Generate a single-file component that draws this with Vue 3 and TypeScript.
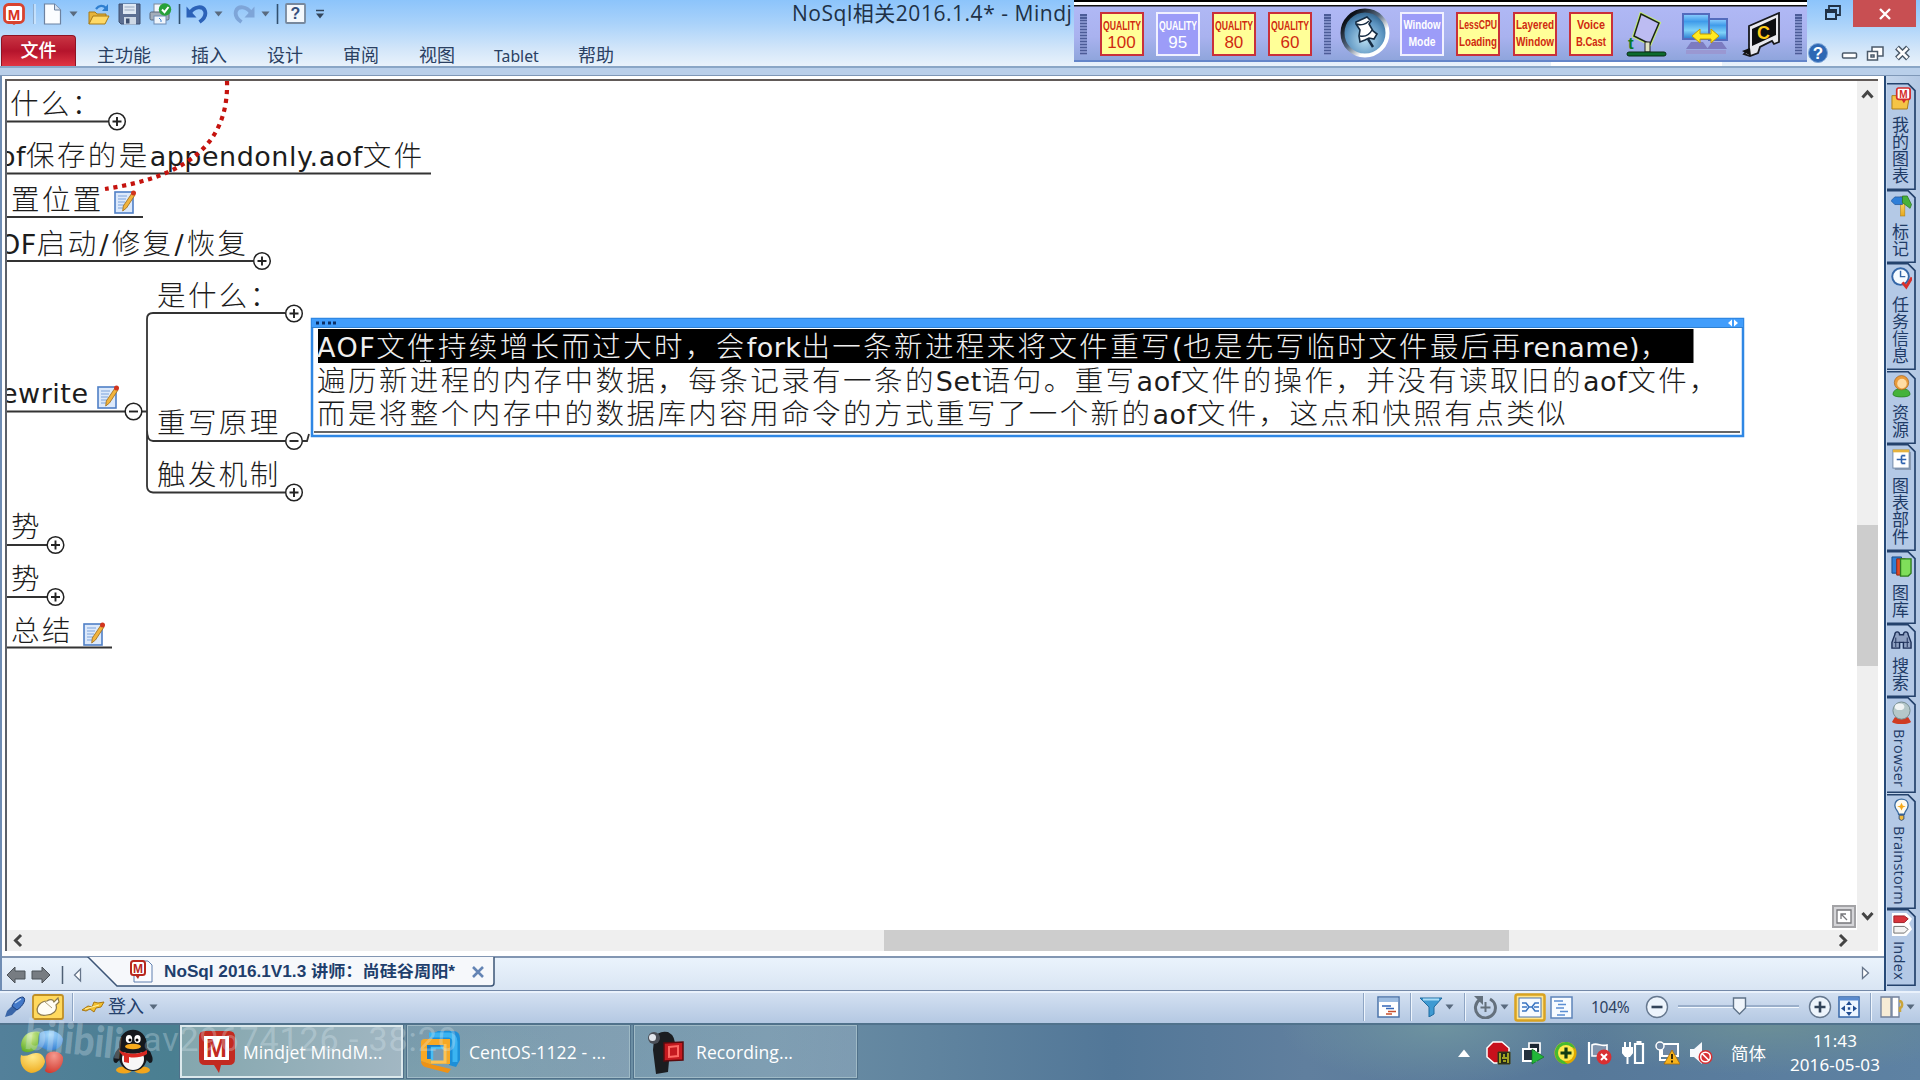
<script setup lang="ts">
interface Item {
  icon: string
  x: number
  w: number
  h: number
}
interface Placed extends Item {
  gap: number
}
interface Run {
  text: string
  cls: string
  dx?: number
}
interface Letter {
  c: string
  x: number
  y: number
  size: number
  fill: string
}

/* Turns left edges into the gap before each item, so rows flow in flex. */
function flow<T extends { x: number; w: number }>(items: T[], start = 0): (T & { gap: number })[] {
  let edge = start
  return items.map((it) => {
    const gap = it.x - edge
    edge = it.x + it.w
    return { ...it, gap }
  })
}

/* Splits mixed text so Chinese and Latin runs each get their own face. */
function runs(text: string): Run[] {
  return (text.match(/[\x20-\x7e]+|[^\x20-\x7e]+/g) ?? []).map((t) => {
    if (!/^[\x20-\x7e]/.test(t)) return { text: t, cls: 'cjk' }
    if (t === '/') return { text: t, cls: 'slash', dx: 1 }
    return { text: t, cls: t === 'AOF' ? 'caps' : 'latin' }
  })
}

const letters: Record<string, Letter> = {
  logo: { c: 'M', x: 11, y: 16.5, size: 15, fill: '#d8321f' },
  ask: { c: '?', x: 10.5, y: 16, size: 16, fill: '#35507c' },
  mine: { c: 'M', x: 12.5, y: 10.5, size: 10, fill: '#d42b2b' },
  tabdoc: { c: 'M', x: 8, y: 13.5, size: 12, fill: '#b8281e' },
  mindjet: { c: 'M', x: 19.5, y: 27, size: 25, fill: '#c22a20' },
}

const quick: Placed[] = flow([
  { icon: 'logo', x: 3, w: 22, h: 22 },
  { icon: 'sep', x: 32, w: 4, h: 22 },
  { icon: 'doc', x: 43, w: 19, h: 22 },
  { icon: 'down', x: 69, w: 9, h: 6 },
  { icon: 'open', x: 88, w: 22, h: 22 },
  { icon: 'save', x: 118, w: 23, h: 22 },
  { icon: 'print', x: 149, w: 23, h: 22 },
  { icon: 'bar', x: 178, w: 3, h: 22 },
  { icon: 'undo', x: 186, w: 22, h: 20 },
  { icon: 'down', x: 214, w: 9, h: 6 },
  { icon: 'redo', x: 233, w: 22, h: 20 },
  { icon: 'down', x: 261, w: 9, h: 6 },
  { icon: 'bar', x: 276, w: 3, h: 22 },
  { icon: 'ask', x: 285, w: 21, h: 22 },
  { icon: 'more', x: 316, w: 8, h: 10 },
])

const ribbon = flow([
  { label: '主功能', x: 97, w: 55 },
  { label: '插入', x: 191, w: 37 },
  { label: '设计', x: 267, w: 37 },
  { label: '审阅', x: 343, w: 37 },
  { label: '视图', x: 419, w: 37 },
  { label: 'Tablet', x: 494, w: 45 },
  { label: '帮助', x: 578, w: 38 },
], 76)

const quality = [
  { a: 'QUALITY', b: '100', on: false },
  { a: 'QUALITY', b: '95', on: true },
  { a: 'QUALITY', b: '80', on: false },
  { a: 'QUALITY', b: '60', on: false },
]
const modes = [
  { a: 'Window', b: 'Mode', wa: 37, wb: 27, on: true },
  { a: 'LessCPU', b: 'Loading', wa: 38, wb: 38, on: false },
  { a: 'Layered', b: 'Window', wa: 38, wb: 38, on: false },
  { a: 'Voice', b: 'B.Cast', wa: 28, wb: 30, on: false },
]

const labels = [
  { t: '什么：', x: 10, y: 114 },
  { t: 'of保存的是appendonly.aof文件', x: -1, y: 165.5 },
  { t: '置位置', x: 11, y: 210 },
  { t: 'OF启动/修复/恢复', x: -1, y: 254 },
  { t: '是什么：', x: 157, y: 306 },
  { t: 'ewrite', x: 1, y: 403 },
  { t: '重写原理', x: 157, y: 433 },
  { t: '触发机制', x: 157, y: 485 },
  { t: '势', x: 11, y: 537 },
  { t: '势', x: 11, y: 589 },
  { t: '总结', x: 11, y: 641 },
]
const rules = [
  [7, 108, 121.5], [7, 431, 173.5], [7, 143, 217], [7, 253, 261], [7, 125, 411.5],
  [7, 47, 545], [7, 47, 597], [7, 112, 647.5],
]
const knobs = [
  { x: 117, y: 121.5, plus: true },
  { x: 262, y: 261, plus: true },
  { x: 294, y: 313.5, plus: true },
  { x: 133.5, y: 411.5, plus: false },
  { x: 294, y: 441, plus: false },
  { x: 294, y: 492.5, plus: true },
  { x: 55.5, y: 545, plus: true },
  { x: 55.5, y: 597, plus: true },
]
const notes = [[114, 190], [97, 385], [83, 622]]

const topic = [
  { t: 'AOF文件持续增长而过大时，会fork出一条新进程来将文件重写(也是先写临时文件最后再rename)，', y: 357, w: 1354, sel: true },
  { t: '遍历新进程的内存中数据，每条记录有一条的Set语句。重写aof文件的操作，并没有读取旧的aof文件，', y: 391, w: 1403, sel: false },
  { t: '而是将整个内存中的数据库内容用命令的方式重写了一个新的aof文件，这点和快照有点类似', y: 424, w: 1251, sel: false },
]

const sideTabs = [
  { label: '我的图表', icon: 'mine', h: 107, latin: false },
  { label: '标记', icon: 'sign', h: 73, latin: false },
  { label: '任务信息', icon: 'task', h: 107, latin: false },
  { label: '资源', icon: 'person', h: 73, latin: false },
  { label: '图表部件', icon: 'parts', h: 107, latin: false },
  { label: '图库', icon: 'lib', h: 73, latin: false },
  { label: '搜索', icon: 'find', h: 73, latin: false },
  { label: 'Browser', icon: 'globe', h: 96, latin: true },
  { label: 'Brainstorm', icon: 'bulb', h: 115, latin: true },
  { label: 'Index', icon: 'index', h: 77, latin: true },
]

const statusLeft: Placed[] = flow([
  { icon: 'pen', x: 4, w: 22, h: 22 },
  { icon: 'mouse', x: 32, w: 32, h: 26 },
  { icon: 'vline', x: 72, w: 2, h: 28 },
  { icon: 'key', x: 81, w: 24, h: 14 },
])
const statusRight: Placed[] = flow([
  { icon: 'vline', x: 1363, w: 2, h: 28 },
  { icon: 'panel', x: 1377, w: 23, h: 22 },
  { icon: 'vline', x: 1410, w: 2, h: 28 },
  { icon: 'funnel', x: 1419, w: 24, h: 20 },
  { icon: 'down', x: 1445, w: 9, h: 6 },
  { icon: 'vline', x: 1464, w: 2, h: 28 },
  { icon: 'rotate', x: 1473, w: 25, h: 24 },
  { icon: 'down', x: 1500, w: 9, h: 6 },
  { icon: 'mapview', x: 1514, w: 32, h: 29 },
  { icon: 'listview', x: 1550, w: 23, h: 23 },
], 1363)
const statusZoom: Placed[] = flow([
  { icon: 'minus', x: 1645, w: 24, h: 24 },
  { icon: 'slider', x: 1677, w: 123, h: 20 },
  { icon: 'plus', x: 1808, w: 24, h: 24 },
  { icon: 'fit', x: 1838, w: 22, h: 22 },
  { icon: 'vline', x: 1870, w: 2, h: 28 },
  { icon: 'split', x: 1880, w: 24, h: 22 },
  { icon: 'down', x: 1906, w: 9, h: 6 },
], 1633)
const tray: Placed[] = flow([
  { icon: 'up', x: 1458, w: 12, h: 8 },
  { icon: 'rec', x: 1486, w: 25, h: 24 },
  { icon: 'vm', x: 1521, w: 24, h: 24 },
  { icon: 'green', x: 1553, w: 25, h: 24 },
  { icon: 'flag', x: 1587, w: 25, h: 24 },
  { icon: 'power', x: 1622, w: 24, h: 24 },
  { icon: 'net', x: 1655, w: 25, h: 24 },
  { icon: 'sound', x: 1689, w: 24, h: 24 },
], 1458)
const tasks = [
  { icon: 'mindjet', label: 'Mindjet MindM...', w: 40, active: true },
  { icon: 'vmware', label: 'CentOS-1122 - ...', w: 42, active: false },
  { icon: 'camera', label: 'Recording...', w: 40, active: false },
]
</script>

<template>
  <div class="screen">
    <svg class="defs" width="0" height="0" aria-hidden="true">
      <linearGradient id="gBlue" x2="0" y2="1"><stop stop-color="#8fd0ff" /><stop offset=".3" stop-color="#3f9bea" /><stop offset=".65" stop-color="#7fd3f8" /><stop offset="1" stop-color="#2a7ad0" /></linearGradient>
      <linearGradient id="gGold" x2="0" y2="1"><stop stop-color="#ffe989" /><stop offset="1" stop-color="#e8a81c" /></linearGradient>
      <radialGradient id="gPin" cx=".5" cy=".65" r=".6"><stop stop-color="#b6dcf0" /><stop offset=".7" stop-color="#5b93c0" /><stop offset="1" stop-color="#34668f" /></radialGradient>
      <linearGradient id="gRing" x2="1" y2="1"><stop offset=".15" stop-color="#0b0f16" /><stop offset=".45" stop-color="#52657c" /><stop offset=".7" stop-color="#ffffff" /></linearGradient>
      <radialGradient id="gYel" cx=".4" cy=".3"><stop stop-color="#fff6a8" /><stop offset="1" stop-color="#e0a800" /></radialGradient>
      <radialGradient id="gLeaf" cx=".5" cy=".2" r=".9"><stop stop-color="#d5ee9a" /><stop offset="1" stop-color="#58a81c" /></radialGradient>
      <radialGradient id="gSky" cx=".5" cy=".2" r=".9"><stop stop-color="#a9dcff" /><stop offset="1" stop-color="#2a78cf" /></radialGradient>
      <radialGradient id="gSun" cx=".5" cy=".2" r=".9"><stop stop-color="#ffe98a" /><stop offset="1" stop-color="#eda614" /></radialGradient>
      <radialGradient id="gRose" cx=".5" cy=".2" r=".9"><stop stop-color="#f59a8e" /><stop offset="1" stop-color="#cf3329" /></radialGradient>

      <symbol id="logo" viewBox="0 0 22 22"><rect x="1.5" y="1.500" width="19" height="18" rx="4" fill="#fff" stroke="#d8432f" stroke-width="2.800" /><path d="M8 20h6l-3 2z" fill="#d8432f" /></symbol>
      <symbol id="sep" viewBox="0 0 4 22"><path d="M1.500 1v20" stroke="#8faccc" /><path d="M3 1v20" stroke="#e8f4ff" /></symbol>
      <symbol id="bar" viewBox="0 0 3 22"><path d="M1.500 1v20" stroke="#32506f" stroke-width="1.600" /></symbol>
      <symbol id="vline" viewBox="0 0 2 28"><path d="M.5 0v28" stroke="#8ea5c4" /><path d="M1.500 0v28" stroke="#eef5fd" /></symbol>
      <symbol id="doc" viewBox="0 0 19 22"><path d="M1.500 1h10l6 6v14h-16z" fill="#fbfdff" stroke="#6d82a0" stroke-width="1.200" /><path d="M11.500 1v6h6" fill="#d6e2f0" stroke="#6d82a0" /></symbol>
      <symbol id="down" viewBox="0 0 9 6"><path d="M.5.5h8l-4 5z" fill="#596a7e" /></symbol>
      <symbol id="up" viewBox="0 0 12 8"><path d="M0 8h12l-6-7.500z" fill="#fff" /></symbol>
      <symbol id="more" viewBox="0 0 8 10"><path d="M0 1.500h8" stroke="#34465c" stroke-width="1.500" /><path d="M0 4.500h8l-4 5z" fill="#34465c" /></symbol>
      <symbol id="open" viewBox="0 0 22 22"><path d="M1 21V9h6l2 2h9v4" fill="#e6b33a" stroke="#a77a16" /><path d="M1 21l4-8h16l-4 8z" fill="#ffd966" stroke="#a77a16" /><path d="M8 6c3-4 7-4 10-1" fill="none" stroke="#2f7fd0" stroke-width="2.200" /><path d="M20 1v7h-6z" fill="#2f7fd0" /></symbol>
      <symbol id="save" viewBox="0 0 23 22"><path d="M1 1h21v20H3l-2-2z" fill="#5c6f92" stroke="#3f5070" /><rect x="5" y="1" width="13" height="10" fill="#dfe8f3" /><path d="M6.500 4h10M6.500 7h10" stroke="#98a8bf" /><rect x="6" y="14" width="12" height="7.500" fill="#cdd8e6" /><rect x="8" y="15.500" width="3.500" height="5" fill="#3f5070" /></symbol>
      <symbol id="print" viewBox="0 0 23 22"><rect x="5" y="1" width="10" height="9" fill="#f4f7fb" stroke="#7d8999" /><rect x="1" y="9" width="19" height="8" rx="1.500" fill="#a4adba" stroke="#59677a" /><rect x="5" y="13" width="12" height="8" fill="#f0f5fc" stroke="#6f8db5" /><path d="M10 15l2 2v2" stroke="#3b82d2" fill="none" /><circle cx="16" cy="6.500" r="6.200" fill="#28a13a" /><path d="M13 6.500l2.500 2.700 4-5.200" fill="none" stroke="#fff" stroke-width="2" /></symbol>
      <symbol id="undo" viewBox="0 0 22 20"><path d="M4 9C8 2 17 1.500 19 7c1.200 4-1 8-5.500 11" fill="none" stroke="#2c62b8" stroke-width="3.800" /><path d="M.5 2.500v11h10z" fill="#2c62b8" /></symbol>
      <symbol id="redo" viewBox="0 0 22 20"><path d="M18 9C14 2 5 1.500 3 7c-1.200 4 1 8 5.500 11" fill="none" stroke="#7ea5d8" stroke-width="3.800" /><path d="M21.500 2.500v11h-10z" fill="#7ea5d8" /></symbol>
      <symbol id="ask" viewBox="0 0 21 22"><rect x="1" y="1" width="19" height="19" rx="1" fill="#f4f8fc" stroke="#77889d" stroke-width="1.800" /></symbol>

      <symbol id="note" viewBox="0 0 22 24"><rect x="1" y="2" width="18" height="21" fill="#dce9fb" stroke="#4f7fc6" stroke-width="1.600" /><path d="M4 6h9M4 9h8M4 12h7M4 15h6M4 18h5" stroke="#7da3dc" stroke-width="1.200" /><path d="M18 3l3 2-8.500 13-3.800 3 .6-5z" fill="#f2b43c" stroke="#9a6a18" stroke-width=".8" /><circle cx="19.500" cy="3" r="2.500" fill="#d2351e" /></symbol>

      <symbol id="mine" viewBox="0 0 22 24"><path d="M1 23V9h6l2 2h10l-2 12z" fill="#f5c445" stroke="#a97b16" /><rect x="6" y="1" width="14" height="12" rx="2" fill="#fff" stroke="#d42b2b" stroke-width="1.800" /><path d="M11 13h5l-2.500 4z" fill="#d42b2b" /></symbol>
      <symbol id="sign" viewBox="0 0 22 24"><rect x="10" y="3" width="4.500" height="20" fill="url(#gGold)" stroke="#b07f14" stroke-width=".6" /><path d="M0 7l4-4h8v8H4z" fill="#2f7fd8" stroke="#1b4f94" stroke-width=".7" /><path d="M12 2h5l4.500 9-1.500 4-8-6z" fill="#48b13a" stroke="#247019" stroke-width=".7" /></symbol>
      <symbol id="task" viewBox="0 0 22 24"><circle cx="10" cy="10" r="8.700" fill="#f6fbff" stroke="#3567a8" stroke-width="2" /><path d="M10 4v6h5" fill="none" stroke="#3567a8" stroke-width="1.500" /><path d="M12 16l4 5 6-10" fill="none" stroke="#d8302c" stroke-width="3" /></symbol>
      <symbol id="person" viewBox="0 0 22 24"><path d="M2 20c0-8 18-8 18 0 0 4-18 4-18 0z" fill="#45b33b" stroke="#22751e" stroke-width=".7" /><circle cx="11" cy="8" r="7.500" fill="#e99b3b" stroke="#a4601a" stroke-width=".7" /><circle cx="11.500" cy="9" r="5" fill="#ffdca4" /></symbol>
      <symbol id="parts" viewBox="0 0 22 24"><rect x="4" y="4" width="17" height="19" fill="#8b9cb4" /><rect x="2" y="2" width="17" height="19" fill="#fff" stroke="#6f86a5" /><path d="M2 3h17" stroke="#e5b23e" stroke-width="3" /><path d="M6 12h5m0-4v8m0-8h4m-4 8h4m-4-4h5" stroke="#2e62ae" stroke-width="1.700" fill="none" /></symbol>
      <symbol id="lib" viewBox="0 0 22 24"><path d="M1 2h10v17H1z" fill="#2e7fd6" stroke="#164a86" /><path d="M6 4h9v17H6z" fill="#e24a2b" stroke="#8e2411" /><path d="M10 4h11v15l-3 3h-8z" fill="#7fdf5a" stroke="#2d7d1d" stroke-width="1.400" /></symbol>
      <symbol id="find" viewBox="0 0 22 24"><path d="M4 7c0-4 5-4 5 0h4c0-4 5-4 5 0l3 8v6h-8v-6h-4v6H1v-6z" fill="#8fa1c2" stroke="#1e3159" stroke-width="1.500" /><path d="M3 15h6M13 15h6M5 10v10M17 10v10" stroke="#1e3159" /></symbol>
      <symbol id="globe" viewBox="0 0 22 24"><path d="M4 17h14l3 5c-4 3-16 3-20 0z" fill="#cf3b22" /><circle cx="11" cy="10" r="9" fill="#b5c8c9" stroke="#748a8e" /><ellipse cx="9" cy="6" rx="5" ry="3.500" fill="#fff" opacity=".8" /></symbol>
      <symbol id="bulb" viewBox="0 0 22 24"><path d="M8 17c0-3-4-5-4-9.500C4 -1 18-1 18 7.500 18 12 14 14 14 17z" fill="#fdfaf0" stroke="#3a6aa0" stroke-width="1.400" /><path d="M11 5l1.500 3 3 .5-3 1.500-1.500 3-1.500-3-3-1.500 3-.5z" fill="#f5a91b" /><path d="M8.500 18h5v4l-2.500 1.500L8.500 22z" fill="#f0b93c" stroke="#33517c" /></symbol>
      <symbol id="index" viewBox="0 0 22 24"><path d="M1 0h15l6 6-3 5 3 6-6 7H1z" fill="#fff" /><path d="M3 3h11l4 3-4 4H3z" fill="#d8343c" stroke="#9b1d26" /><path d="M3 14h11l4 3-4 4H3z" fill="#f3f3f3" stroke="#6d6d6d" /></symbol>

      <symbol id="tabdoc" viewBox="0 0 23 24"><path d="M8 2h10l4 4v17H4V17" fill="#fafcff" stroke="#5f7fae" /><rect x="1" y="2" width="14" height="14" rx="2.500" fill="#fff" stroke="#b8281e" stroke-width="2" /><path d="M5 16h5l-2 4z" fill="#b8281e" /></symbol>
      <symbol id="pen" viewBox="0 0 22 22"><path d="M1 21l2-6 6-6 5 4-6 6z" fill="#3a66a8" /><path d="M8 10C10 5 15 1 19 1c4 2 0 9-6 13z" fill="#4278c8" stroke="#1d3f7d" /><path d="M11 7l6-4" stroke="#b9d4f5" stroke-width="1.500" /></symbol>
      <symbol id="mouse" viewBox="0 0 32 26"><rect x="1" y="1" width="30" height="24" rx="2" fill="#ffd95e" stroke="#c08f25" stroke-width="1.800" /><path d="M6 19c-3-6 3-12 9-12 3-2 6-2 7 1l4-4 1 4-3 3c2 6-4 10-9 10-4 1-7 0-9-2z" fill="#fffdf5" stroke="#8c7a4d" stroke-width="1.200" /><path d="M13 8l7 6" stroke="#b0a37c" /></symbol>
      <symbol id="key" viewBox="0 0 24 14"><path d="M1 10l6-4 4 1 2-5 4 1 6-1-3 5-5 1-2 4-4-3-4 2z" fill="#f3c02e" stroke="#a87612" /><path d="M4 9l14-4" stroke="#fff0a8" /></symbol>
      <symbol id="panel" viewBox="0 0 23 22"><rect x="1" y="1" width="21" height="20" fill="#fff" stroke="#4b74ab" stroke-width="1.500" /><path d="M2 4h19" stroke="#9dbde2" stroke-width="4" /><path d="M5 10h9M9 12.500h8" stroke="#3567b8" stroke-width="1.600" /><path d="M11 15.500h8M9 18h6" stroke="#c8502d" stroke-width="1.600" /></symbol>
      <symbol id="funnel" viewBox="0 0 24 20"><path d="M1 1h22l-8 9v7l-5 3V10z" fill="#3e9ad2" stroke="#1e6a9f" /><path d="M4 2.500h16" stroke="#a9dcf7" stroke-width="2" /></symbol>
      <symbol id="rotate" viewBox="0 0 25 24"><path d="M7 4.500A10 10 0 1 0 17 4" fill="none" stroke="#64707c" stroke-width="3" /><path d="M1 1l9 0 0 9z" fill="#64707c" /><path d="M12.500 7v10M7.500 12.500h10" stroke="#64707c" stroke-width="2" /></symbol>
      <symbol id="mapview" viewBox="0 0 32 29"><rect x="1.500" y="1.500" width="29" height="26" rx="2" fill="#ffe48d" stroke="#d9a321" stroke-width="2.500" /><rect x="5" y="5" width="22" height="19" fill="#f7fbff" stroke="#4a76b3" /><path d="M8 10h4l3 4h3l3-4h4M8 18h4l3-4M25 18h-4l-3-4M8 14h5M20 14h5" fill="none" stroke="#3b76c2" stroke-width="1.600" /></symbol>
      <symbol id="listview" viewBox="0 0 23 23"><rect x="1" y="1" width="21" height="21" fill="#f7fbff" stroke="#5e84b9" stroke-width="1.500" /><path d="M4 5h9M8 8.500h8M6 12h8M10 15.500h8M7 19h8" stroke="#5c8fd2" stroke-width="1.600" /></symbol>
      <symbol id="minus" viewBox="0 0 24 24"><circle cx="12" cy="12" r="10.500" fill="#edf4fc" stroke="#66788f" stroke-width="1.400" /><path d="M6.500 12h11" stroke="#33445a" stroke-width="2.600" /></symbol>
      <symbol id="plus" viewBox="0 0 24 24"><circle cx="12" cy="12" r="10.500" fill="#edf4fc" stroke="#66788f" stroke-width="1.400" /><path d="M6.500 12h11M12 6.500v11" stroke="#33445a" stroke-width="2.600" /></symbol>
      <symbol id="slider" viewBox="0 0 123 20"><path d="M1 9h121" stroke="#6f87a8" /><path d="M1 10.500h121" stroke="#f2f8ff" /><path d="M56.500 1h12v10l-6 6-6-6z" fill="#f0f5fb" stroke="#5f7288" stroke-width="1.400" /></symbol>
      <symbol id="fit" viewBox="0 0 22 22"><rect x="1" y="1" width="20" height="20" fill="#eef6ff" stroke="#3465a8" stroke-width="1.500" /><path d="M1 3h20" stroke="#5a8bd0" stroke-width="3" /><path d="M11 5l3 4h-6zM11 20l3-4h-6zM3 12.500l4-3v6zM19 12.500l-4-3v6zM9.800 11.300h2.400v2.400h-2.400z" fill="#204c92" /></symbol>
      <symbol id="split" viewBox="0 0 24 22"><path d="M1 1h10v20H1z" fill="#f7ecd6" stroke="#71809a" stroke-width="1.300" /><path d="M12 1h7v20h-7z" fill="#fff" stroke="#71809a" stroke-width="1.300" /><path d="M19 5c4 0 4 6 1 7v4" stroke="#caa43a" stroke-width="2.500" fill="none" /></symbol>

      <symbol id="rec" viewBox="0 0 25 24"><path d="M7 1h9l7 6v9l-6 6H8l-7-6V7z" fill="#c8101c" stroke="#fff" stroke-width="1.500" /><path d="M12 11h12v12H12z" fill="#23271a" stroke="#3c3f1a" /><path d="M14 12v10M22 12v10M16 17h5M18 13v3M17 20h3" stroke="#c9c925" stroke-width="1.500" /></symbol>
      <symbol id="vm" viewBox="0 0 24 24"><path d="M8 2h11v10H8z" fill="#1c2733" stroke="#fff" stroke-width="1.700" /><path d="M2 8h13v12H2z" fill="#26323d" stroke="#fff" stroke-width="2" /><path d="M11 8v15l12-7z" fill="#22b638" stroke="#0d6c1b" stroke-width=".6" /></symbol>
      <symbol id="green" viewBox="0 0 25 24"><circle cx="12.500" cy="12" r="11" fill="url(#gYel)" /><path d="M2 10C5-2 20-1 22 8 17 4 11 5 9 12c-1 5 2 9 6 11C7 24 1 18 2 10z" fill="#47b92f" /><circle cx="13" cy="12" r="8" fill="#ffe94d" /><path d="M13 6.500v11M7.500 12h11" stroke="#123c12" stroke-width="3.200" /></symbol>
      <symbol id="flag" viewBox="0 0 25 24"><path d="M2 1v22" stroke="#fff" stroke-width="2.200" /><path d="M5 4c5-3 9 2 15 0v11H5z" fill="#8094ad" stroke="#fff" stroke-width="1.600" /><circle cx="17" cy="16" r="7.500" fill="#d92f32" /><path d="M14 13l6 6m0-6l-6 6" stroke="#fff" stroke-width="2" /></symbol>
      <symbol id="power" viewBox="0 0 24 24"><path d="M13 3h8v19h-8z" fill="none" stroke="#fff" stroke-width="2.200" /><path d="M14.500 1h5" stroke="#fff" stroke-width="2" /><path d="M1 7h9v5L7.500 15h-4L1 12zM3 1v6M8 1v6M5.500 14v9" stroke="#fff" stroke-width="2" fill="#fff" /></symbol>
      <symbol id="net" viewBox="0 0 25 24"><path d="M7 3h16v12H7z" fill="#6e87a3" stroke="#fff" stroke-width="2" /><circle cx="5" cy="5" r="4" fill="#6e87a3" stroke="#fff" stroke-width="1.500" /><path d="M5 9v10h8" stroke="#fff" fill="none" stroke-width="2" /><path d="M17 9l8 14H9z" fill="#f7b31c" stroke="#a8690a" stroke-width=".8" /><path d="M17 13v5M17 19.500v2" stroke="#3a2b07" stroke-width="2" /></symbol>
      <symbol id="sound" viewBox="0 0 24 24"><path d="M1 8h4l8-7v22l-8-7H1z" fill="#f6f8fb" /><circle cx="16.500" cy="16" r="7" fill="#d82f32" /><circle cx="16.500" cy="16" r="4.800" fill="none" stroke="#fff" stroke-width="1.500" /><path d="M13 12.500l7 7" stroke="#fff" stroke-width="1.700" /></symbol>

      <symbol id="mindjet" viewBox="0 0 40 44"><path d="M7 1h25q6 0 6 6v22q0 6-6 6h-8l-2 8-5-8H8q-6 0-6-6V7q0-6 6-6z" fill="#c22a20" /><rect x="7" y="6" width="25" height="24" fill="#fff" /></symbol>
      <symbol id="vmware" viewBox="0 0 42 44"><path d="M13 4l6-3h16q6 1 6 7v22l-4 7-7-2V12H13z" fill="#1d8fd8" /><path d="M10 5h20q6 1 6 7v20" fill="none" stroke="#3bb4f2" stroke-width="5" /><path d="M2 12q0-3 4-3h25v25H10L2 31z" fill="#f7a823" /><path d="M8 15h17v14H8z" fill="#1a7cc4" /><path d="M13 18h13v14H13z" fill="#7d9aae" stroke="#49bdf3" stroke-width="2.500" /><path d="M26 14v18H12" fill="none" stroke="#ffc251" stroke-width="3" /><path d="M2 31l9 3 21 5-3 4L6 37q-4-2-4-6z" fill="#ee9216" /></symbol>
      <symbol id="camera" viewBox="0 0 40 44"><path d="M8 9q4-9 14-7 8 4 7 16l-5 2-2 22-12 2-3-24z" fill="#1b1d20" /><circle cx="8" cy="8" r="6" fill="#4b4f57" /><circle cx="6.500" cy="7.500" r="3.500" fill="#e4e8ee" /><path d="M18 13l19-1v18l-19 1z" fill="#c51a20" stroke="#5c0b0e" stroke-width="1.500" /><path d="M23 17l9-1v10l-9 1z" fill="none" stroke="#ff6a64" stroke-width="2" /></symbol>
    </svg>

    <header class="head">
      <div class="head-left">
        <div class="quick">
          <svg v-for="(q, i) in quick" :key="i" :width="q.w" :height="q.h" :style="{ marginLeft: q.gap + 'px' }"><use :href="'#' + q.icon" /><text v-if="letters[q.icon]" class="letter" :x="letters[q.icon].x" :y="letters[q.icon].y" :font-size="letters[q.icon].size" :fill="letters[q.icon].fill">{{ letters[q.icon].c }}</text></svg>
        </div>
        <nav class="ribbon">
          <span class="file">文件</span>
          <span v-for="r in ribbon" :key="r.label" class="rtab" :style="{ marginLeft: r.gap + 'px', width: r.w + 'px' }">{{ r.label }}</span>
        </nav>
      </div>
      <div class="title">NoSql相关2016.1.4* - Mindj</div>
      <div class="capture">
        <i class="grip"></i>
        <span v-for="b in quality" :key="b.b" class="cap q" :class="{ on: b.on }"><b><svg width="38" height="13"><text x="0" y="11" textLength="38" lengthAdjust="spacingAndGlyphs">{{ b.a }}</text></svg></b><em>{{ b.b }}</em></span>
        <i class="grip second"></i>
        <svg class="pin" width="50" height="50" viewBox="0 0 50 50"><circle cx="25" cy="25" r="22.500" fill="url(#gPin)" stroke="url(#gRing)" stroke-width="4" /><path d="M16 14l11-5 4 4-2 3 4 7 4 3-3 5-5-1-4 2-5 2-1-6 1-6-4-6z" fill="#fff" stroke="#152b42" stroke-width="1.600" /><path d="M17 16c4 2 9 0 12-3M20 28c6 1 10-2 12-6" fill="none" stroke="#152b42" stroke-width="1.500" /><path d="M28 31l5 8" stroke="#152b42" stroke-width="2.500" /></svg>
        <span v-for="m in modes" :key="m.a" class="cap m" :class="{ on: m.on }"><svg width="40" height="40"><text x="20" y="14.500" text-anchor="middle" :textLength="m.wa" lengthAdjust="spacingAndGlyphs">{{ m.a }}</text><text x="20" y="31.500" text-anchor="middle" :textLength="m.wb" lengthAdjust="spacingAndGlyphs">{{ m.b }}</text></svg></span>
        <svg class="tool t1" width="42" height="46" viewBox="0 0 42 46"><path d="M15 2l18 9-9 21-16-8z" fill="#b5b4ee" stroke="#c4ee72" stroke-width="3.500" /><path d="M15 2l18 9-9 21-16-8z" fill="#bdbcf2" stroke="#1b2417" stroke-width="1.500" /><path d="M19 30h5v10h-5z" fill="#dfe3c4" stroke="#222" /><rect x="1" y="40" width="39" height="4" rx="2" fill="#0d6a2d" stroke="#082c14" /><text x="2" y="37" font-size="17" font-weight="700" fill="#0b7a27" font-family="Liberation Sans,sans-serif">t</text></svg>
        <svg class="tool t2" width="47" height="44" viewBox="0 0 47 44"><path d="M1 2h26v25H1z" fill="url(#gBlue)" stroke="#536bbd" stroke-width="2" /><path d="M27 7h18v21H27z" fill="url(#gBlue)" stroke="#536bbd" stroke-width="2" /><path d="M4 37h22l-5-7H9zM25 37h20l-5-7H30z" fill="#7c7bc0" /><path d="M4 40h22M26 40h18" stroke="#9a98d2" stroke-width="4" /><path d="M10 24l8-7v5h11v-5l8 7-8 7v-4H18v4z" fill="#ffea20" stroke="#c39a00" /></svg>
        <svg class="tool t3" width="41" height="46" viewBox="0 0 41 46"><path d="M7 14L37 1v29l-5 2-2-3-12 6-2 6-8 3-6-2 5-5z" fill="#e9e9ee" stroke="#17181c" stroke-width="1.800" /><path d="M10 17l24-11v17L10 34z" fill="#0d0e10" /><path d="M0 39l8-3 1 8z" fill="#111" /><text x="15" y="27" font-size="18" font-weight="900" fill="#ffcb16" font-family="Liberation Sans,sans-serif">C</text></svg>
        <i class="grip third"></i>
      </div>
      <div class="winbtns">
        <div class="wrow">
          <svg class="restore" width="16" height="16" viewBox="0 0 16 16"><path d="M4 4V1h11v9h-3" fill="none" stroke="#213246" stroke-width="1.800" /><path d="M1 5h10v9H1zM1 7h10" fill="none" stroke="#213246" stroke-width="2" /></svg>
          <span class="close"><svg width="12" height="12" viewBox="0 0 12 12"><path d="M1 1l10 10M11 1L1 11" stroke="#fff" stroke-width="2.400" /></svg></span>
        </div>
        <svg class="docbtns" width="106" height="24" viewBox="0 0 106 24"><circle cx="11" cy="12" r="9.500" fill="#2e68b4" stroke="#7ea6d9" /><text x="11" y="18" text-anchor="middle" font-size="17" font-weight="700" fill="#fff" font-family="Liberation Sans,sans-serif">?</text><rect x="35.500" y="12" width="14" height="5" rx="1" fill="#fff" stroke="#4b5a6a" stroke-width="1.500" /><path d="M65 6h11v9H65z" fill="#fff" stroke="#4b5a6a" stroke-width="1.500" /><path d="M60.500 10.500h10v8.500h-10zM64 14h3v2h-3z" fill="#fff" stroke="#4b5a6a" stroke-width="1.500" /><path d="M90 6.500l11 11M101 6.500l-11 11" stroke="#4b5a6a" stroke-width="5.500" /><path d="M90.500 7l10 10M100.500 7l-10 10" stroke="#fff" stroke-width="2.500" /></svg>
      </div>
    </header>
    <div class="band"></div>

    <div class="work">
      <div class="docarea">
        <div class="frame">
          <svg class="map" width="1850" height="849" viewBox="7 81 1850 849">
            <g stroke="#333" stroke-width="1.800" fill="none">
              <path v-for="(r, i) in rules" :key="i" :d="`M${r[0]} ${r[2]}H${r[1]}`" />
              <path d="M285 313H153q-6 0-6 6V486q0 6 6 6.500H285M147 430q0 11 6 11H285M142 411.500h5M303 441h4l2-7" />
            </g>
            <text v-for="(l, i) in labels" :key="i" :x="l.x" :y="l.y" class="lbl"><tspan v-for="(r, j) in runs(l.t)" :key="j" :dx="r.dx" :class="r.cls">{{ r.text }}</tspan></text>
            <g v-for="(k, i) in knobs" :key="i" stroke="#222">
              <circle :cx="k.x" :cy="k.y" r="8.300" fill="#fff" stroke-width="1.500" />
              <path :d="`M${k.x - 4.500} ${k.y}h9` + (k.plus ? `M${k.x} ${k.y - 4.500}v9` : '')" stroke-width="1.900" />
            </g>
            <svg v-for="(n, i) in notes" :key="i" :x="n[0]" :y="n[1]" width="22" height="24"><use href="#note" /></svg>
            <path d="M227 81C229 146 184 177 105 189" fill="none" stroke="#c5130e" stroke-width="4.200" stroke-dasharray="4.200 4.700" />

            <rect x="312" y="319" width="1431" height="117" fill="#fff" stroke="#2f87e4" stroke-width="2.500" />
            <rect x="312" y="319" width="1431" height="8" fill="#419dfb" />
            <path d="M311 327.500H1743" stroke="#2f80d0" />
            <path d="M316 323h3M322 323h3M328 323h3M333 323h3" stroke="#0b2f66" stroke-width="3" />
            <path d="M1732 319.500v7l-4-3.500zM1734 319.500v7l4-3.500z" fill="#fff" />
            <path d="M314 432H1740" stroke="#333" stroke-width="1.500" />
            <rect x="318" y="329" width="1375.500" height="34" fill="#000" />
            <text v-for="n in topic" :key="n.y" x="317" :y="n.y" class="lbl" :class="{ sel: n.sel }" :textLength="n.w"><tspan v-for="(r, j) in runs(n.t)" :key="j" :class="r.cls">{{ r.text }}</tspan></text>
            <path d="M420 341h4l1.500 1 1.500-1h4M425.500 342v18M420 361h4l1.500-1 1.500 1h4" stroke="#e5e5e5" stroke-width="1.300" fill="none" />
            <rect x="1833" y="906" width="22" height="21" fill="#d5d5d8" stroke="#a3a3a6" stroke-width="2" />
            <path d="M1837 910h14v13h-14z" fill="#fff" stroke="#77777b" stroke-width="1.300" />
            <path d="M1841 919v-5h5M1841 914l6 6" fill="none" stroke="#77777b" stroke-width="1.300" />
          </svg>
          <div class="vbar">
            <svg width="21" height="30" viewBox="0 0 21 30"><path d="M5.500 16.500l5-5.500 5 5.500" fill="none" stroke="#444" stroke-width="3" /></svg>
            <i class="vthumb"></i>
            <svg width="21" height="26" viewBox="0 0 21 26"><path d="M5.500 9l5 5.500 5-5.500" fill="none" stroke="#444" stroke-width="3" /></svg>
          </div>
        </div>
        <div class="hbar">
          <svg width="24" height="21" viewBox="0 0 24 21"><path d="M14 5l-5.500 5.500 5.500 5.500" fill="none" stroke="#444" stroke-width="3" /></svg>
          <i class="hthumb"></i>
          <svg width="24" height="21" viewBox="0 0 24 21"><path d="M9 5l5.500 5.500-5.500 5.500" fill="none" stroke="#444" stroke-width="3" /></svg>
        </div>
        <div class="doctabs">
          <svg class="nav" width="84" height="32" viewBox="2 0 84 32"><path d="M7 17l8-8v4h10v8H15v4zM50 17l-8-8v4H32v8h10v4z" fill="#777c82" stroke="#4c5259" /><path d="M62.500 8v18" stroke="#4f6075" stroke-width="1.500" /><path d="M80.500 11v12l-6-6z" fill="#fff" stroke="#66758a" stroke-width="1.300" /></svg>
          <div class="dtab">
            <svg class="dshape" width="411" height="32" viewBox="0 0 411 32"><path d="M1-1L31 29H405q3 0 3-3V-1" fill="#f6f8fb" stroke="#3c5577" stroke-width="1.500" /></svg>
            <svg class="dicon" width="23" height="24"><use href="#tabdoc" /><text class="letter" :x="letters.tabdoc.x" :y="letters.tabdoc.y" :font-size="letters.tabdoc.size" :fill="letters.tabdoc.fill">{{ letters.tabdoc.c }}</text></svg>
            <svg class="dtext" width="294" height="24"><text x="0" y="18" textLength="291" lengthAdjust="spacingAndGlyphs">NoSql 2016.1V1.3 讲师：尚硅谷周阳*</text></svg>
            <svg class="dx" width="12" height="12" viewBox="0 0 12 12"><path d="M1 1l10 10M11 1L1 11" stroke="#6484b4" stroke-width="2.600" /></svg>
          </div>
          <svg class="navr" width="10" height="14" viewBox="0 0 10 14"><path d="M1.500 1.500v11l6-5.500z" fill="#fff" stroke="#66758a" stroke-width="1.300" /></svg>
        </div>
      </div>
      <aside class="side">
        <div v-for="s in sideTabs" :key="s.label" class="stab" :class="{ latin: s.latin }" :style="{ height: s.h + 'px' }">
          <svg class="sbg" width="31" :height="s.h" :viewBox="`0 0 31 ${s.h}`"><path :d="`M1 .7H22l7 7V${s.h - .7}H1`" fill="#b4c9e6" stroke="#24426c" stroke-width="1.700" /></svg>
          <svg class="sicon" width="21" height="23"><use :href="'#' + s.icon" /><text v-if="letters[s.icon]" class="letter" :x="letters[s.icon].x" :y="letters[s.icon].y" :font-size="letters[s.icon].size" :fill="letters[s.icon].fill">{{ letters[s.icon].c }}</text></svg>
          <span>{{ s.label }}</span>
        </div>
      </aside>
    </div>

    <div class="status">
      <div class="srow">
        <svg v-for="(q, i) in statusLeft" :key="i" :width="q.w" :height="q.h" :style="{ marginLeft: q.gap + 'px' }"><use :href="'#' + q.icon" /></svg>
        <span class="login">登入</span>
        <svg class="ldown" width="9" height="6"><use href="#down" /></svg>
      </div>
      <div class="srow">
        <svg v-for="(q, i) in statusRight" :key="i" :width="q.w" :height="q.h" :style="{ marginLeft: q.gap + 'px' }"><use :href="'#' + q.icon" /></svg>
        <span class="pct">104%</span>
        <svg v-for="(q, i) in statusZoom" :key="'z' + i" :width="q.w" :height="q.h" :style="{ marginLeft: q.gap + 'px' }"><use :href="'#' + q.icon" /></svg>
      </div>
    </div>

    <footer class="taskbar">
      <svg class="start" width="46" height="46" viewBox="0 0 46 46"><path d="M2 16C3 5 12 1 21 3c-3 5 0 12-4 17-5 4-12 4-14 1z" fill="url(#gLeaf)" /><path d="M21 4c8-5 20-2 23 6 0 8-7 12-14 11-6 0-8-5-12-3 4-5 1-10 3-14z" fill="url(#gSky)" /><path d="M2 26c6 3 10-3 16-2 5 0 8 5 8 9-2 7-8 11-14 11C4 42 0 34 2 26z" fill="url(#gSun)" /><path d="M28 25c5-4 13-3 16 3 1 8-5 15-12 16-5 0-6-2-6-3 4-5-2-11 2-16z" fill="url(#gRose)" /></svg>
      <svg class="qq" width="40" height="46" viewBox="0 0 40 46"><ellipse cx="11" cy="42" rx="8" ry="3.500" fill="#f2a51c" /><ellipse cx="29" cy="42" rx="8" ry="3.500" fill="#f2a51c" /><path d="M7 20C1 26 0 34 3 34l5-5M33 20c6 6 7 14 4 14l-5-5" fill="#15181d" stroke="#15181d" stroke-width="2" /><ellipse cx="20" cy="29" rx="14" ry="14" fill="#15181d" /><ellipse cx="20" cy="31" rx="11" ry="11" fill="#f7f7f7" /><path d="M6 19C5-4 35-4 34 19c0 9-28 9-28 0z" fill="#15181d" /><ellipse cx="16" cy="11" rx="3.200" ry="4" fill="#fff" /><ellipse cx="24.500" cy="11" rx="3.200" ry="4" fill="#fff" /><circle cx="17" cy="12" r="1.500" /><circle cx="24" cy="12" r="1.500" /><ellipse cx="20" cy="18.500" rx="8" ry="2.800" fill="#f7ab1d" /><path d="M6 22c8 5 20 5 28 0v4c-6 4-14 4-18 3v6l-5-1v-6q-4-2-5-6z" fill="#d92822" /></svg>
      <div v-for="t in tasks" :key="t.label" class="task" :class="{ active: t.active }">
        <svg :width="t.w" height="44"><use :href="'#' + t.icon" /><text v-if="letters[t.icon]" class="letter" :x="letters[t.icon].x" :y="letters[t.icon].y" :font-size="letters[t.icon].size" :fill="letters[t.icon].fill">{{ letters[t.icon].c }}</text></svg>
        <span :style="{ marginLeft: 50 - t.w + 'px' }">{{ t.label }}</span>
      </div>
      <div class="tray">
        <svg v-for="(q, i) in tray" :key="i" :width="q.w" :height="q.h" :style="{ marginLeft: q.gap + 'px' }"><use :href="'#' + q.icon" /></svg>
        <span class="ime">简体</span>
        <div class="clock"><span>11:43</span><span>2016-05-03</span></div>
      </div>
    </footer>
    <div class="mark"><b>bilibili</b><span>av29674126 - 38:20</span></div>
  </div>
</template>

<style>
html, body { margin: 0; overflow: hidden; }
</style>

<style scoped>
.screen { position: relative; width: 1920px; height: 1080px; overflow: hidden; display: flex; flex-direction: column; background: #bdd0ea; font-family: "Noto Sans", "Noto Sans CJK SC", sans-serif; }
.defs { position: absolute; }
svg { display: block; flex: none; }
.letter { font-family: "Liberation Sans", sans-serif; font-weight: 900; text-anchor: middle; }
.head { height: 66px; flex: none; display: flex; background: linear-gradient(#fff, #fff) 1551px 62px / 171px 4px no-repeat, linear-gradient(#8cc4fb, #a9d2fa 35%, #d3e6f9 75%, #e9f2fb); }
.head-left { width: 792px; flex: none; }
.quick { height: 28px; display: flex; align-items: center; }
.ribbon { display: flex; height: 38px; font-size: 18px; color: #2a4062; font-family: "Noto Sans", "Noto Sans CJK SC", sans-serif; }
.file { width: 75px; margin-left: 1px; height: 31px; margin-top: 7px; border-radius: 4px 4px 0 0; background: linear-gradient(#c93543, #b5142c 50%, #e03543); border: 1px solid #8e1323; border-bottom: 0; box-sizing: border-box; color: #fff; font-weight: 500; text-align: center; line-height: 28px; }
.rtab { line-height: 54px; white-space: nowrap; }
.rtab:nth-child(7) { font-size: 15.800px; line-height: 56px; }
.title { width: 282px; flex: none; font-size: 21px; line-height: 27px; color: #203147; white-space: nowrap; overflow: hidden; letter-spacing: .53px; font-family: "Open Sans", "Noto Sans CJK SC", sans-serif; }
.capture { width: 733px; height: 62px; flex: none; box-sizing: border-box; border-top: 2px solid #000; box-shadow: inset 0 3px #fff, inset 0 4.500px #111; border-bottom: 2px solid #6385c9; background: linear-gradient(#b1b9f6, #a9b2ef 60%, #8fa5dc); display: flex; align-items: flex-start; padding: 0 0 0 6px; }
.grip { width: 7px; height: 41px; margin-top: 12px; flex: none; background: repeating-linear-gradient(#4c5c98 0 1.500px, #8290c9 1.500px 3px); }
.grip.second { margin-left: 12px; }
.grip.third { margin-left: 12px; }
.cap { width: 44px; height: 44px; flex: none; margin-top: 10px; margin-left: 12.200px; box-sizing: border-box; border: 2px solid #c9303a; background: #ffff98; color: #cf2a10; display: flex; flex-direction: column; align-items: center; }
.cap.on { background: #9c9cf8; border-color: #f0f0ff; color: #fff; }
.cap.q:first-of-type { margin-left: 12.500px; }
.cap text { font: 700 13px "Liberation Sans", sans-serif; fill: currentColor; }
.cap.q svg { margin-top: 5px; }
.cap em { font: normal 17px/19px "Liberation Sans", sans-serif; margin-top: 1px; }
.pin { margin: 6px -2px 0 9px; }
.tool { margin-top: 10px; }
.t1 { margin-left: 13px; }
.t2 { margin-left: 14px; }
.t3 { margin-left: 13px; }
.winbtns { flex: 1; }
.wrow { display: flex; height: 41px; }
.restore { margin: 5px 0 0 18px; }
.close { width: 63px; height: 27px; margin-left: 12px; background: #c84f52; display: flex; align-items: center; justify-content: center; }
.band { height: 10px; flex: none; box-sizing: border-box; background: #b9cfea; border-top: 2px solid #8aa6c6; border-bottom: 1.500px solid #7f98b8; }
.work { display: flex; height: 915px; flex: none; }
.docarea { width: 1886px; box-sizing: border-box; border-left: 2px solid #6f8db4; border-right: 2px solid #274a78; background: #fff; display: flex; flex-direction: column; }
.frame { margin: 3px 6px 0 3px; height: 851px; box-sizing: border-box; border-top: 2px solid #615a58; border-left: 2px solid #5c6068; display: flex; flex: none; }
.map { font-family: "DejaVu Sans", "Noto Sans CJK SC", sans-serif; }
.lbl { font-size: 27px; fill: #1c1c1c; }
.lbl .latin { letter-spacing: .5px; }
.lbl .caps { letter-spacing: 1.500px; }
.lbl .slash { letter-spacing: 3px; }
.lbl .cjk { font-family: "Noto Sans CJK SC", sans-serif; font-size: 28.500px; font-weight: 300; letter-spacing: 2.400px; }
.lbl.sel { fill: #efefef; }
.vbar { width: 21px; background: #efefef; display: flex; flex-direction: column; justify-content: space-between; }
.vthumb { height: 141px; background: #cdcdcd; margin: 414px 0 238px; }
.hbar { height: 21px; margin: 0 6px 0 3px; flex: none; display: flex; background: #efefef; border-left: 2px solid #5c6068; box-sizing: border-box; }
.hthumb { width: 625px; background: #cdcdcd; margin-left: 853px; margin-right: 322px; flex: none; }
.doctabs { margin-top: 5px; height: 35px; box-sizing: border-box; border-top: 2px solid #8296b2; border-bottom: 1px solid #7489a8; background: linear-gradient(#eaf3fc, #d9e5f3); display: flex; }
.dtab { position: relative; width: 411px; display: flex; align-items: flex-start; }
.dshape { position: absolute; left: 0; top: -1px; }
.dicon { position: relative; margin: 1px 0 0 44px; }
.dtext { position: relative; margin: 1px 0 0 11px; }
.dtext text { font: 700 16px "Liberation Sans", "Noto Sans CJK SC", sans-serif; fill: #203e6c; }
.dx { position: relative; margin: 8px 0 0 14px; }
.navr { margin: 8px 0 0 auto; padding-right: 13px; }
.side { width: 34px; background: linear-gradient(90deg, #c3d5ec, #b3c8e4); padding-top: 7px; box-sizing: border-box; }
.stab { position: relative; width: 31px; display: flex; flex-direction: column; align-items: center; box-sizing: border-box; padding: 4px 1px 0 0; margin-bottom: .2px; }
.sbg { position: absolute; left: 0; top: 0; }
.sicon { position: relative; }
.stab span { position: relative; margin-top: 5px; font: 17px/17px "Noto Sans CJK SC", sans-serif; color: #1f3b66; width: 18px; word-break: break-all; }
.stab.latin span { writing-mode: vertical-rl; width: auto; font: 14.500px/17px "Open Sans", sans-serif; word-break: normal; letter-spacing: .3px; margin-top: 5px; margin-right: 4px; }
.status { height: 32px; flex: none; display: flex; justify-content: space-between; border-top: 2px solid #eaf2fc; padding-bottom: 2px; box-sizing: border-box; background: linear-gradient(#d3e0f1, #b4c8e2); }
.srow { display: flex; align-items: center; }
.srow:last-child { width: 557px; }
.login { margin-left: 3px; font-size: 18px; line-height: 24px; padding-bottom: 2px; color: #24406c; width: 37px; }
.ldown { margin-left: 4px; }
.pct { width: 60px; padding-left: 18px; box-sizing: border-box; font-size: 15.500px; letter-spacing: -.3px; color: #2d4262; }
.taskbar { height: 57px; flex: none; display: flex; border-top: 2px solid #50728c; box-sizing: border-box; background: radial-gradient(ellipse 180px 60px at 440px 55px, #7095a2 0, transparent 100%), radial-gradient(ellipse 160px 60px at 1440px 0, #6e93a0 0, transparent 100%), radial-gradient(ellipse 220px 50px at 1770px 0, #6b8e97 0, transparent 100%), linear-gradient(90deg, #53809a, #4a7f91 9%, #6a8da1 20%, #6c8fa5 40%, #527798 58%, #607f9e 68%, #567899 82%, #5e82a3); }
.start { margin: 4px 0 0 19px; }
.qq { margin: 3px 0 0 48px; }
.task { width: 223px; height: 53px; box-sizing: border-box; margin-left: 4px; border: 1.500px solid #9fbac6; background: linear-gradient(100deg, rgba(160,190,205,.25), rgba(190,205,220,.28)); display: flex; align-items: center; color: #fff; font-size: 17.500px; box-shadow: 0 0 0 1px #50718a; }
.task svg { margin-left: 11px; }
.task span { white-space: nowrap; font-family: "Open Sans", sans-serif; letter-spacing: .1px; }
.task.active { margin-left: 27px; background: linear-gradient(100deg, #83a6ad, #a2b7c3); border: 2px solid #dce9ec; }
.task.active svg { margin-left: 15px; }
.task.active span { transform: translateX(-4px); }
.tray { margin-left: auto; width: 462px; display: flex; align-items: center; color: #fff; }
.ime { font-size: 17.500px; margin-left: 18px; }
.clock { width: 110px; margin-left: 14px; display: flex; flex-direction: column; align-items: center; font-size: 17px; line-height: 24px; letter-spacing: .15px; }
.mark { position: absolute; left: 25px; top: 1018px; display: flex; align-items: center; height: 42px; color: rgba(225, 238, 245, .3); white-space: nowrap; }
.mark b { font: 900 37px/42px "Lato", sans-serif; width: 118px; transform: rotate(6deg) scaleY(1.15); letter-spacing: -.2px; }
.mark span { font: 34px/42px "Roboto", sans-serif; letter-spacing: .9px; }
</style>
